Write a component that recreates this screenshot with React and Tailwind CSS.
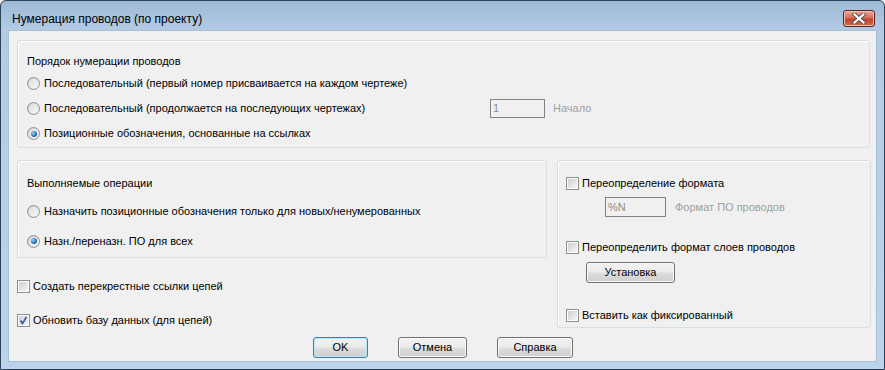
import React from "react";

const Radio = ({ checked }) => (
  <span className="relative inline-flex items-center justify-center w-[13px] h-[13px] rounded-full border border-[#8e8f8f] bg-gradient-to-br from-[#cdcdcd] to-[#f8f8f8] shrink-0">
    <span className="w-[9px] h-[9px] rounded-full bg-gradient-to-br from-[#dedede] to-[#f7f7f7]" />
    {checked && (
      <span className="absolute w-[6px] h-[6px] rounded-full bg-[radial-gradient(circle_at_35%_35%,#8fd6ff,#1a5fa0_70%,#0d3a6e)]" />
    )}
  </span>
);

const Check = ({ checked }) => (
  <span className="relative inline-flex items-center justify-center w-[13px] h-[13px] border border-[#8e8f8f] bg-white shrink-0">
    <span className="w-[9px] h-[9px] bg-gradient-to-br from-[#cfcfcf] to-[#f6f6f6]" />
    {checked && (
      <svg className="absolute" width="11" height="11" viewBox="0 0 11 11">
        <path d="M2.5 5.5 L4.5 8.5 L8.5 2" fill="none" stroke="#3a5aa8" strokeWidth="1.6" />
      </svg>
    )}
  </span>
);

const Btn = ({ children, w, def }) => (
  <button
    className={`h-[21px] ${w} rounded-[3px] border ${def ? "border-[#3c7fb1] shadow-[inset_0_0_0_1px_#bfe6f7]" : "border-[#707070] shadow-[inset_0_0_0_1px_#fbfbfb]"} bg-[linear-gradient(#f2f2f2_0%,#ebebeb_48%,#dddddd_52%,#cfcfcf_100%)] text-[11px] text-black leading-none`}
  >
    {children}
  </button>
);

const Group = ({ className, children }) => (
  <div className={`rounded-[3px] border border-[#d5dfe5] shadow-[inset_1px_1px_0_#ffffff] ${className}`}>{children}</div>
);

export default function App() {
  return (
    <div className="w-[885px] h-[370px] bg-[#f0f0f0]">
      <div
        className="w-[885px] h-[370px] border border-[#2b4259] rounded-t-[6px] bg-[linear-gradient(180deg,#9fbad7_0px,#b3cbe5_30px,#bcd3ec_100%)] flex flex-col"
        style={{ fontFamily: '"Liberation Sans", Arial, sans-serif' }}
      >
        <div className="h-[29px] flex items-start pl-[11px] pr-[9px]">
          <span className="mt-[11px] text-[12px] leading-[14px] text-black">
            Нумерация проводов (по проекту)
          </span>
          <div className="ml-auto mt-[9px] w-[32px] h-[17px] rounded-[3px] border border-[#5e1f1f] bg-[linear-gradient(#e8a897_0%,#d7705b_45%,#c3432c_55%,#d16a4e_100%)] flex items-center justify-center shadow-[inset_0_0_0_1px_#f3c2b5]">
            <svg width="14" height="11" viewBox="0 0 14 11">
              <path d="M2.5 1.5 L11.5 9.5 M11.5 1.5 L2.5 9.5" stroke="#5a4a4a" strokeWidth="4" strokeLinecap="square" />
              <path d="M2.5 1.5 L11.5 9.5 M11.5 1.5 L2.5 9.5" stroke="#ffffff" strokeWidth="2.2" strokeLinecap="square" />
            </svg>
          </div>
        </div>

        <div className="mx-[7px] h-[332px] bg-[#f0f0f0] border border-[#a9bdd3] text-[11px] text-black flex flex-col">
          <Group className="ml-[8px] mr-[6px] mt-[9px] h-[108px] pl-[9px] pt-[10px]">
            <div className="h-[20px] flex items-center">Порядок нумерации проводов</div>
            <div className="h-[25px] flex items-center gap-[4px]">
              <Radio />
              <span>Последовательный (первый номер присваивается на каждом чертеже)</span>
            </div>
            <div className="h-[25px] flex items-center">
              <div className="w-[463px] flex items-center gap-[4px]">
                <Radio />
                <span>Последовательный (продолжается на последующих чертежах)</span>
              </div>
              <div className="w-[55px] h-[19px] border border-[#838383] bg-[#f0f0f0] pl-[2px] flex items-center text-[#8d8d8d]">1</div>
              <span className="ml-[8px] text-[#a0a0a0]">Начало</span>
            </div>
            <div className="h-[25px] flex items-center gap-[4px]">
              <Radio checked />
              <span>Позиционные обозначения, основанные на ссылках</span>
            </div>
          </Group>

          <div className="flex mt-[12px] ml-[8px]">
            <div className="w-[530px] flex flex-col">
              <Group className="h-[98px] pl-[9px] pt-[12px]">
                <div className="h-[20px] flex items-center">Выполняемые операции</div>
                <div className="h-[20px] mt-[8px] flex items-center gap-[4px]">
                  <Radio />
                  <span>Назначить позиционные обозначения только для новых/ненумерованных</span>
                </div>
                <div className="h-[20px] mt-[10px] flex items-center gap-[4px]">
                  <Radio checked />
                  <span>Назн./переназн. ПО для всех</span>
                </div>
              </Group>
              <div className="h-[20px] mt-[18px] flex items-center gap-[3px]">
                <Check />
                <span>Создать перекрестные ссылки цепей</span>
              </div>
              <div className="h-[20px] mt-[14px] flex items-center gap-[3px]">
                <Check checked />
                <span>Обновить базу данных (для цепей)</span>
              </div>
            </div>

            <Group className="ml-[10px] w-[314px] h-[168px] pl-[8px] pt-[12px]">
              <div className="h-[20px] flex items-center gap-[3px]">
                <Check />
                <span>Переопределение формата</span>
              </div>
              <div className="h-[20px] mt-[4px] flex items-center pl-[39px]">
                <div className="w-[61px] h-[20px] border border-[#838383] bg-[#f0f0f0] pl-[2px] flex items-center text-[#8d8d8d]">%N</div>
                <span className="ml-[9px] text-[#a0a0a0]">Формат ПО проводов</span>
              </div>
              <div className="h-[20px] mt-[20px] flex items-center gap-[3px]">
                <Check />
                <span>Переопределить формат слоев проводов</span>
              </div>
              <div className="mt-[5px] pl-[20px]">
                <Btn w="w-[89px]">Установка</Btn>
              </div>
              <div className="h-[20px] mt-[22px] flex items-center gap-[3px]">
                <Check />
                <span>Вставить как фиксированный</span>
              </div>
            </Group>
          </div>

          <div className="flex mt-[7px] pl-[304px] gap-[30px]">
            <Btn w="w-[55px]" def>OK</Btn>
            <Btn w="w-[69px]">Отмена</Btn>
            <Btn w="w-[76px]">Справка</Btn>
          </div>
        </div>
      </div>
    </div>
  );
}
